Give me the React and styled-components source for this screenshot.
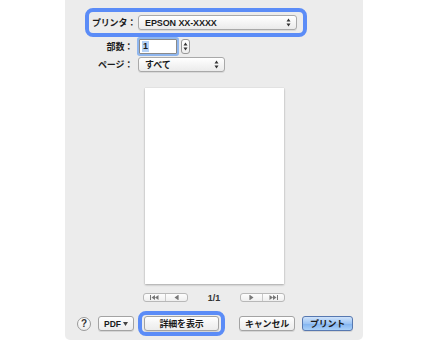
import React from "react";
import styled, { createGlobalStyle } from "styled-components";

const Global = createGlobalStyle`
  html, body { margin: 0; padding: 0; background: #ffffff; }
  body { font-family: "Noto Sans CJK JP", "Liberation Sans", sans-serif; }
`;

const FONT = `"Liberation Sans", "Noto Sans CJK JP", sans-serif`;

const Panel = styled.div`
  margin-left: 65px;
  width: 298px;
  height: 340px;
  background: #ececec;
  border-radius: 0 0 5px 5px;
  display: flex;
  flex-direction: column;
  box-sizing: border-box;
  padding-top: 8px;
  font-family: ${FONT};
  font-size: 9px;
  color: #1c1c1c;
`;

const Highlight = styled.div`
  box-sizing: border-box;
  border: 4px solid #5b8cf7;
  border-radius: 8px;
  display: flex;
  align-items: center;
`;

const PrinterBox = styled(Highlight)`
  margin-left: 20px;
  width: 222px;
  height: 29px;
  padding-left: 3px;
`;

const Label = styled.span`
  font-weight: 700;
  font-size: 9px;
  white-space: nowrap;
  letter-spacing: -0.2px;
`;

const PrinterLabel = styled(Label)`
  width: 46px;
  flex: none;
`;

const Popup = styled.div`
  box-sizing: border-box;
  width: ${(p) => p.$w}px;
  height: 15px;
  border: 1px solid #a9a9a9;
  border-radius: 3px;
  background: linear-gradient(#ffffff, #f3f3f3 60%, #ebebeb);
  box-shadow: 0 1px 0 rgba(0,0,0,0.08);
  display: flex;
  align-items: center;
  justify-content: space-between;
  padding: 0 5px 0 6px;
  font-weight: 700;
  font-size: 9px;
  letter-spacing: -0.1px;
`;

const Arrows = styled.svg`
  width: 5px;
  height: 9px;
  flex: none;
`;

const UpDown = () => (
  <Arrows viewBox="0 0 5 9">
    <path d="M2.5 0.5 L4.5 3.5 L0.5 3.5 Z M2.5 8.5 L4.5 5.5 L0.5 5.5 Z" fill="#333" />
  </Arrows>
);

const FormGrid = styled.div`
  display: grid;
  grid-template-columns: 68px auto;
  column-gap: 5px;
  row-gap: 3px;
  margin-top: 2px;
  align-items: center;
`;

const RightLabel = styled(Label)`
  text-align: right;
`;

const CopiesWrap = styled.div`
  display: flex;
  align-items: center;
  gap: 2px;
`;

const NumberInput = styled.div`
  box-sizing: border-box;
  width: 38px;
  height: 15px;
  background: #fff;
  border: 1px solid #8a8a8a;
  box-shadow: 0 0 0 2px #8fb6ee;
  border-radius: 1px;
  margin-left: 1px;
  display: flex;
  align-items: center;
  padding-left: 2px;
  font-weight: 700;
  font-size: 9px;
`;

const Selected = styled.span`
  background: #b4d1f7;
  padding: 0 1px;
  line-height: 11px;
`;

const Stepper = styled.div`
  box-sizing: border-box;
  width: 9px;
  height: 15px;
  border: 1px solid #999;
  border-radius: 3px;
  background: linear-gradient(#fff, #eee);
  display: flex;
  align-items: center;
  justify-content: center;
  margin-left: 2px;
`;

const PageRowControl = styled.div`
  display: flex;
`;

const PreviewArea = styled.div`
  display: flex;
  justify-content: center;
  margin-top: 16px;
`;

const Sheet = styled.div`
  width: 139px;
  height: 196px;
  background: #fff;
  box-shadow: 0 1px 2px rgba(0,0,0,0.28), 0 0 1px rgba(0,0,0,0.12);
`;

const NavRow = styled.div`
  display: flex;
  justify-content: center;
  align-items: center;
  gap: 19px;
  margin-top: 9px;
  height: 9px;
`;

const NavGroup = styled.div`
  box-sizing: border-box;
  width: 45px;
  height: 9px;
  border: 1px solid #b8b8b8;
  border-radius: 3px;
  background: linear-gradient(#fdfdfd, #efefef);
  display: flex;
  align-items: center;
`;

const NavHalf = styled.div`
  flex: 1;
  display: flex;
  align-items: center;
  justify-content: center;
  height: 100%;
  & + & { border-left: 1px solid #c8c8c8; }
`;

const NavIcon = styled.svg`
  height: 5px;
`;

const PageCount = styled.span`
  font-weight: 700;
  font-size: 9px;
  color: #333;
  width: 14px;
  text-align: center;
`;

const BottomRow = styled.div`
  display: flex;
  align-items: center;
  margin-top: 9px;
  padding-left: 12px;
`;

const Help = styled.div`
  box-sizing: border-box;
  width: 14px;
  height: 14px;
  border-radius: 50%;
  border: 1px solid #9a9a9a;
  background: linear-gradient(#fff, #ececec);
  display: flex;
  align-items: center;
  justify-content: center;
  font-weight: 700;
  font-size: 10px;
  color: #333;
`;

const Button = styled.div`
  box-sizing: border-box;
  flex: none;
  height: 15px;
  width: ${(p) => p.$w}px;
  border: 1px solid ${(p) => (p.$primary ? "#5778b0" : "#a3a3a3")};
  border-radius: 3px;
  background: ${(p) =>
    p.$primary
      ? "linear-gradient(#cfe3fb, #9cc4f4 50%, #80b2ef 51%, #a9d0f8)"
      : "linear-gradient(#ffffff, #f4f4f4 50%, #ececec)"};
  box-shadow: 0 1px 0 rgba(0,0,0,0.1);
  display: flex;
  align-items: center;
  justify-content: ${(p) => p.$justify || "center"};
  padding: ${(p) => p.$pad || "0"};
  font-weight: 700;
  font-size: 9px;
  color: #1a1a1a;
  letter-spacing: -0.2px;
  white-space: nowrap;
`;

const PdfText = styled.span`
  font-size: 8.5px;
  letter-spacing: 0;
`;

const PdfArrow = styled.svg`
  width: 5px;
  height: 4px;
  flex: none;
`;

const DetailBox = styled(Highlight)`
  width: 87px;
  height: 25px;
  margin-left: 4px;
  justify-content: center;
`;

const Spacer = styled.div`
  width: ${(p) => p.$w}px;
  flex: none;
`;

export default function App() {
  return (
    <>
      <Global />
      <Panel>
        <PrinterBox>
          <PrinterLabel>プリンタ：</PrinterLabel>
          <Popup $w={159}>
            <span>EPSON XX-XXXX</span>
            <UpDown />
          </Popup>
        </PrinterBox>
        <FormGrid>
          <RightLabel>部数：</RightLabel>
          <CopiesWrap>
            <NumberInput>
              <Selected>1</Selected>
            </NumberInput>
            <Stepper>
              <UpDown />
            </Stepper>
          </CopiesWrap>
          <RightLabel>ページ：</RightLabel>
          <PageRowControl>
            <Popup $w={87}>
              <span>すべて</span>
              <UpDown />
            </Popup>
          </PageRowControl>
        </FormGrid>
        <PreviewArea>
          <Sheet />
        </PreviewArea>
        <NavRow>
          <NavGroup>
            <NavHalf>
              <NavIcon viewBox="0 0 9 5" width="9">
                <rect x="0" y="0" width="1" height="5" fill="#777" />
                <path d="M5 0 L1.5 2.5 L5 5 Z M8.5 0 L5 2.5 L8.5 5 Z" fill="#777" />
              </NavIcon>
            </NavHalf>
            <NavHalf>
              <NavIcon viewBox="0 0 5 5" width="5">
                <path d="M4 0 L0.5 2.5 L4 5 Z" fill="#777" />
                <rect x="4" y="0" width="1" height="5" fill="#aaa" />
              </NavIcon>
            </NavHalf>
          </NavGroup>
          <PageCount>1/1</PageCount>
          <NavGroup>
            <NavHalf>
              <NavIcon viewBox="0 0 5 5" width="5">
                <rect x="0" y="0" width="1" height="5" fill="#aaa" />
                <path d="M1 0 L4.5 2.5 L1 5 Z" fill="#777" />
              </NavIcon>
            </NavHalf>
            <NavHalf>
              <NavIcon viewBox="0 0 9 5" width="9">
                <path d="M0.5 0 L4 2.5 L0.5 5 Z M4 0 L7.5 2.5 L4 5 Z" fill="#777" />
                <rect x="8" y="0" width="1" height="5" fill="#777" />
              </NavIcon>
            </NavHalf>
          </NavGroup>
        </NavRow>
        <BottomRow>
          <Help>?</Help>
          <Spacer $w={7} />
          <Button $w={36} $justify="space-between" $pad="0 5px 0 5px">
            <PdfText>PDF</PdfText>
            <PdfArrow viewBox="0 0 5 4">
              <path d="M0 0 L5 0 L2.5 4 Z" fill="#444" />
            </PdfArrow>
          </Button>
          <DetailBox>
            <Button $w={75}>詳細を表示</Button>
          </DetailBox>
          <Spacer $w={14} />
          <Button $w={56}>キャンセル</Button>
          <Spacer $w={7} />
          <Button $w={51} $primary>
            プリント
          </Button>
        </BottomRow>
      </Panel>
    </>
  );
}
